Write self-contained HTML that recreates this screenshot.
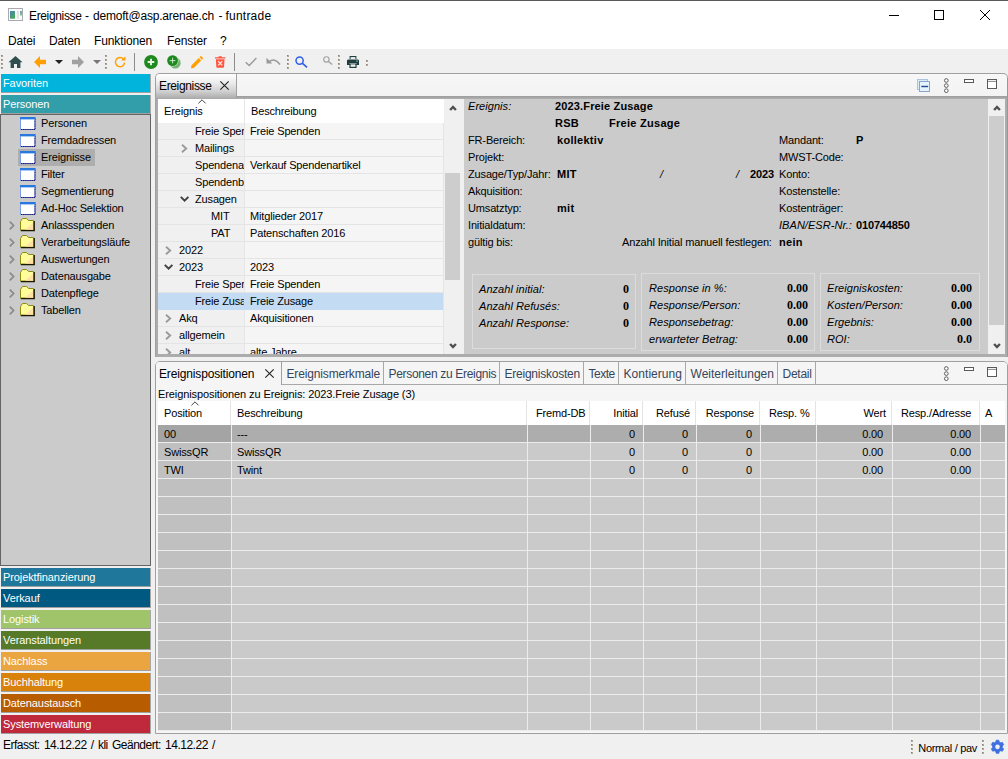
<!DOCTYPE html>
<html lang="de"><head><meta charset="utf-8"><title>Ereignisse - demoft@asp.arenae.ch - funtrade</title>
<style>
*{box-sizing:border-box;margin:0;padding:0}
html,body{width:1008px;height:759px;overflow:hidden;background:#f0f0f0}
body{font-family:"Liberation Sans",sans-serif;font-size:11px;color:#000;position:relative}
.abs{position:absolute}
.t{position:absolute;white-space:nowrap;line-height:14px;height:14px}
.ui{font-size:12px;letter-spacing:-0.12px}
.b{font-weight:bold}
.i{font-style:italic}
.r{text-align:right}
.sb{font-family:"Liberation Serif",serif;font-weight:bold;font-size:12px;letter-spacing:0}
#title{left:0;top:0;width:1008px;height:31px;background:#fff;border-top:1px solid #5a5a5a}
#menu{left:0;top:31px;width:1008px;height:18px;background:#fff}
#tool{left:0;top:49px;width:1008px;height:25px;background:#f0f0f0}
.bar{position:absolute;left:1px;width:150px;height:19px;border-right:1px solid #a8a8a8;border-bottom:1px solid #a0a0a0;color:#fff;font-size:11px;line-height:19px;padding-left:2px;white-space:nowrap;letter-spacing:-0.1px}
svg{position:absolute;overflow:visible}
</style></head><body>

<div id="title" class="abs"></div>
<svg style="left:8px;top:8px" width="15" height="13" viewBox="0 0 15 13">
<defs><linearGradient id="gi" x1="0" y1="0" x2="0.6" y2="1"><stop offset="0" stop-color="#4a80b8"/><stop offset="1" stop-color="#48a858"/></linearGradient><linearGradient id="gj" x1="0" y1="0" x2="0" y2="1"><stop offset="0" stop-color="#6a98c8"/><stop offset="1" stop-color="#90d080"/></linearGradient></defs>
<rect x="0.5" y="0.5" width="14" height="12" fill="#fafafa" stroke="#a8acb2"/>
<rect x="2" y="3" width="5" height="7.7" fill="url(#gi)"/>
<rect x="8.8" y="3" width="2.1" height="7.7" fill="#e2e2e2"/>
<rect x="12" y="3" width="2" height="4.6" fill="url(#gj)"/>
</svg>
<div class="t ui" style="left:29px;top:9px;letter-spacing:-0.35px">Ereignisse <span style="position:absolute;left:56px;top:0">- </span><span style="position:absolute;left:64px;top:0;letter-spacing:-0.2px">demoft@asp.arenae.ch </span><span style="position:absolute;left:189.5px;top:0">- </span><span style="position:absolute;left:196.5px;top:0;letter-spacing:0.22px">funtrade</span></div>
<div class="abs" style="left:889px;top:15px;width:10px;height:1px;background:#000"></div>
<div class="abs" style="left:934px;top:10px;width:10px;height:10px;border:1px solid #000"></div>
<svg style="left:980px;top:10px" width="10" height="10" viewBox="0 0 10 10"><path d="M0 0L10 10M10 0L0 10" stroke="#000" stroke-width="1" fill="none"/></svg>
<div id="menu" class="abs"></div>
<div class="t ui" style="left:8px;top:34px">Datei</div>
<div class="t ui" style="left:49px;top:34px">Daten</div>
<div class="t ui" style="left:94px;top:34px">Funktionen</div>
<div class="t ui" style="left:167px;top:34px">Fenster</div>
<div class="t ui" style="left:220px;top:34px">?</div>
<div id="tool" class="abs"></div>
<svg style="left:1px;top:55px" width="3" height="15" viewBox="0 0 3 15"><path d="M0 0h2v2h-2zM0 4h2v2h-2zM0 8h2v2h-2zM0 12h2v2h-2z" fill="#b0a694"/><path d="M0 0h1v1h-1zM0 4h1v1h-1zM0 8h1v1h-1zM0 12h1v1h-1z" fill="#8a7e6a"/></svg>
<svg style="left:105px;top:55px" width="3" height="15" viewBox="0 0 3 15"><path d="M0 0h2v2h-2zM0 4h2v2h-2zM0 8h2v2h-2zM0 12h2v2h-2z" fill="#b0a694"/><path d="M0 0h1v1h-1zM0 4h1v1h-1zM0 8h1v1h-1zM0 12h1v1h-1z" fill="#8a7e6a"/></svg>
<svg style="left:287px;top:55px" width="3" height="15" viewBox="0 0 3 15"><path d="M0 0h2v2h-2zM0 4h2v2h-2zM0 8h2v2h-2zM0 12h2v2h-2z" fill="#b0a694"/><path d="M0 0h1v1h-1zM0 4h1v1h-1zM0 8h1v1h-1zM0 12h1v1h-1z" fill="#8a7e6a"/></svg>
<svg style="left:338px;top:55px" width="3" height="15" viewBox="0 0 3 15"><path d="M0 0h2v2h-2zM0 4h2v2h-2zM0 8h2v2h-2zM0 12h2v2h-2z" fill="#b0a694"/><path d="M0 0h1v1h-1zM0 4h1v1h-1zM0 8h1v1h-1zM0 12h1v1h-1z" fill="#8a7e6a"/></svg>
<svg style="left:366px;top:60px" width="2" height="6" viewBox="0 0 2 6"><path d="M0 0h2v2h-2zM0 4h2v2h-2z" fill="#b0a694"/><path d="M0 0h1v1h-1zM0 4h1v1h-1z" fill="#8a7e6a"/></svg>
<svg style="left:8px;top:55px" width="15" height="14" viewBox="0 0 15 14"><path d="M7.5 1L0.5 7.2H2.6V13H6V9H9V13H12.4V7.2H14.5Z" fill="#2f4f4f"/></svg>
<svg style="left:34px;top:56px" width="12" height="12" viewBox="0 0 12 12"><path d="M0 6L6 0V3.7H12V8.3H6V12Z" fill="#ffa000"/></svg>
<svg style="left:55px;top:60px" width="8" height="4" viewBox="0 0 8 4"><path d="M0 0H8L4 4Z" fill="#222"/></svg>
<svg style="left:72px;top:56px" width="12" height="12" viewBox="0 0 12 12"><path d="M12 6L6 0V3.7H0V8.3H6V12Z" fill="#a0a0a0"/></svg>
<svg style="left:93px;top:60px" width="8" height="4" viewBox="0 0 8 4"><path d="M0 0H8L4 4Z" fill="#777"/></svg>
<svg style="left:114px;top:56px" width="12" height="12" viewBox="0 0 12 12"><path d="M9.6 3.2A4.6 4.6 0 1 0 10.6 6.6" stroke="#ffa000" stroke-width="1.5" fill="none"/><path d="M11.5 0.3V4.6H7.2Z" fill="#ffa000"/></svg>
<div class="abs" style="left:134px;top:53px;width:1px;height:18px;background:#8c8c8c"></div>
<svg style="left:144px;top:55px" width="14" height="14" viewBox="0 0 14 14"><circle cx="7" cy="7" r="6.9" fill="#1e8a1e"/><path d="M7 3.7V10.3M3.7 7H10.3" stroke="#e4f4e4" stroke-width="1.9"/></svg>
<svg style="left:167px;top:55px" width="14" height="14" viewBox="0 0 14 14"><circle cx="8.2" cy="8" r="5.5" fill="#74b474"/><circle cx="5.6" cy="5.6" r="5.9" fill="#e4f0e4"/><circle cx="5.6" cy="5.6" r="5.4" fill="#1e8a1e"/><path d="M5.6 2.8V8.4M2.8 5.6H8.4" stroke="#d8f0d8" stroke-width="0.9"/></svg>
<svg style="left:189.8px;top:55.6px" width="13.5" height="13" viewBox="0 0 14 14"><path d="M0.8 13.2L1.2 10.2L9.2 2.2L11.8 4.8L3.8 12.8Z M10 1.4L11 0.4Q11.5 0 12 0.4L13.6 2Q14 2.5 13.6 3L12.6 4Z" fill="#ffa000"/></svg>
<svg style="left:215px;top:56px" width="10.4" height="12" viewBox="0 0 11 12"><path d="M0 1H3.5L4 0H7L7.5 1H11V2.4H0Z M0.9 3.2H10.1L9.6 11Q9.5 12 8.6 12H2.4Q1.5 12 1.4 11Z" fill="#fc5640"/><path d="M3.4 5.2L7.6 9.6M7.6 5.2L3.4 9.6" stroke="#fde8e4" stroke-width="1.3"/></svg>
<div class="abs" style="left:234px;top:53px;width:1px;height:18px;background:#8c8c8c"></div>
<svg style="left:245px;top:57px" width="12" height="10" viewBox="0 0 12 10"><path d="M0.7 5.2L4.2 8.6L11.4 1" stroke="#9a9a9a" stroke-width="1.4" fill="none"/></svg>
<svg style="left:266px;top:57px" width="15" height="9" viewBox="0 0 15 9"><path d="M0.5 0.8V6.4H6.2Z" fill="#9a9a9a"/><path d="M3 4.8Q8.5 0.2 14 7.6" stroke="#9a9a9a" stroke-width="1.6" fill="none"/></svg>
<svg style="left:295px;top:56px" width="13" height="12" viewBox="0 0 13 12"><circle cx="4.6" cy="4.6" r="3.6" stroke="#2f5fe8" stroke-width="1.5" fill="none"/><path d="M7.2 7.2L12 11.4" stroke="#2f5fe8" stroke-width="1.7"/></svg>
<svg style="left:323px;top:56px" width="10" height="9" viewBox="0 0 10 9"><circle cx="3.4" cy="3.4" r="2.7" stroke="#a0a0a0" stroke-width="1.1" fill="none"/><path d="M5.4 5.4L9.2 8.6" stroke="#a0a0a0" stroke-width="1.3"/></svg>
<svg style="left:347px;top:56px" width="12" height="12" viewBox="0 0 12 12"><path d="M2.6 0H9.4V3H2.6Z M1.4 3.4H10.6Q12 3.4 12 4.8V9H9.6V7H2.4V9H0V4.8Q0 3.4 1.4 3.4Z M2.4 7.4H9.6V12H2.4Z" fill="#1f3f3f"/><rect x="3.6" y="1.1" width="4.8" height="1.9" fill="#f0f0f0"/><rect x="3.6" y="8.4" width="4.8" height="2.4" fill="#f0f0f0"/><rect x="9.3" y="4.6" width="1.4" height="1" fill="#c8d8d8"/></svg>
<div class="bar" style="top:74px;background:#00b4dc">Favoriten</div>
<div class="bar" style="top:95px;background:#329eaa">Personen</div>
<div class="bar" style="top:568px;background:#1f789c">Projektfinanzierung</div>
<div class="bar" style="top:589px;background:#005980">Verkauf</div>
<div class="bar" style="top:610px;background:#a0c46a">Logistik</div>
<div class="bar" style="top:631px;background:#567a28">Veranstaltungen</div>
<div class="bar" style="top:652px;background:#eba540">Nachlass</div>
<div class="bar" style="top:673px;background:#d8820c">Buchhaltung</div>
<div class="bar" style="top:694px;background:#b85c00">Datenaustausch</div>
<div class="bar" style="top:715px;background:#c0283c">Systemverwaltung</div>
<div class="abs" style="left:0;top:114px;width:151px;height:452px;background:#cbcbcb;border:1px solid #646464"></div>
<div class="abs" style="left:18px;top:149px;width:77px;height:17px;background:#aeaeae"></div>
<svg style="left:20px;top:117px" width="16" height="13" viewBox="0 0 16 13"><rect x="0.5" y="0.5" width="14.5" height="12" fill="#fff" stroke="#7c9ce8" stroke-width="1"/><path d="M15 2V12.5H1" fill="none" stroke="#181878" stroke-width="1.1" stroke-dasharray="1.5 0.6"/><rect x="0" y="0" width="15.5" height="2" fill="#2878e0"/><rect x="1" y="2" width="13.5" height="1" fill="#a8ccf8"/></svg>
<div class="t" style="left:41px;top:116px;letter-spacing:-0.15px">Personen</div>
<svg style="left:20px;top:134px" width="16" height="13" viewBox="0 0 16 13"><rect x="0.5" y="0.5" width="14.5" height="12" fill="#fff" stroke="#7c9ce8" stroke-width="1"/><path d="M15 2V12.5H1" fill="none" stroke="#181878" stroke-width="1.1" stroke-dasharray="1.5 0.6"/><rect x="0" y="0" width="15.5" height="2" fill="#2878e0"/><rect x="1" y="2" width="13.5" height="1" fill="#a8ccf8"/></svg>
<div class="t" style="left:41px;top:133px;letter-spacing:-0.15px">Fremdadressen</div>
<svg style="left:20px;top:151px" width="16" height="13" viewBox="0 0 16 13"><rect x="0.5" y="0.5" width="14.5" height="12" fill="#fff" stroke="#7c9ce8" stroke-width="1"/><path d="M15 2V12.5H1" fill="none" stroke="#181878" stroke-width="1.1" stroke-dasharray="1.5 0.6"/><rect x="0" y="0" width="15.5" height="2" fill="#2878e0"/><rect x="1" y="2" width="13.5" height="1" fill="#a8ccf8"/></svg>
<div class="t" style="left:41px;top:150px;letter-spacing:-0.15px">Ereignisse</div>
<svg style="left:20px;top:168px" width="16" height="13" viewBox="0 0 16 13"><rect x="0.5" y="0.5" width="14.5" height="12" fill="#fff" stroke="#7c9ce8" stroke-width="1"/><path d="M15 2V12.5H1" fill="none" stroke="#181878" stroke-width="1.1" stroke-dasharray="1.5 0.6"/><rect x="0" y="0" width="15.5" height="2" fill="#2878e0"/><rect x="1" y="2" width="13.5" height="1" fill="#a8ccf8"/></svg>
<div class="t" style="left:41px;top:167px;letter-spacing:-0.15px">Filter</div>
<svg style="left:20px;top:185px" width="16" height="13" viewBox="0 0 16 13"><rect x="0.5" y="0.5" width="14.5" height="12" fill="#fff" stroke="#7c9ce8" stroke-width="1"/><path d="M15 2V12.5H1" fill="none" stroke="#181878" stroke-width="1.1" stroke-dasharray="1.5 0.6"/><rect x="0" y="0" width="15.5" height="2" fill="#2878e0"/><rect x="1" y="2" width="13.5" height="1" fill="#a8ccf8"/></svg>
<div class="t" style="left:41px;top:184px;letter-spacing:-0.15px">Segmentierung</div>
<svg style="left:20px;top:202px" width="16" height="13" viewBox="0 0 16 13"><rect x="0.5" y="0.5" width="14.5" height="12" fill="#fff" stroke="#7c9ce8" stroke-width="1"/><path d="M15 2V12.5H1" fill="none" stroke="#181878" stroke-width="1.1" stroke-dasharray="1.5 0.6"/><rect x="0" y="0" width="15.5" height="2" fill="#2878e0"/><rect x="1" y="2" width="13.5" height="1" fill="#a8ccf8"/></svg>
<div class="t" style="left:41px;top:201px;letter-spacing:-0.15px">Ad-Hoc Selektion</div>
<svg style="left:9px;top:221px" width="6" height="9" viewBox="0 0 6 9"><path d="M0.8 0.7L4.6 4.5L0.8 8.3" stroke="#8a8a8a" stroke-width="1.7" fill="none"/></svg>
<svg style="left:20px;top:218px" width="15" height="13" viewBox="0 0 15 13"><path d="M0.5 12V3.5L2 1Q2.3 0.5 3 0.5H6.2Q6.8 0.5 7.2 1L8.5 2.5H13.5V12Z" fill="#fffc9c" stroke="#8c8c10" stroke-width="1"/><path d="M5 12L13 4.5V12Z" fill="#ffd8a8" opacity="0.75"/><path d="M14.3 3V12.6H0.8" stroke="#1a1a00" stroke-width="1.2" fill="none"/></svg>
<div class="t" style="left:41px;top:218px;letter-spacing:-0.15px">Anlassspenden</div>
<svg style="left:9px;top:238px" width="6" height="9" viewBox="0 0 6 9"><path d="M0.8 0.7L4.6 4.5L0.8 8.3" stroke="#8a8a8a" stroke-width="1.7" fill="none"/></svg>
<svg style="left:20px;top:235px" width="15" height="13" viewBox="0 0 15 13"><path d="M0.5 12V3.5L2 1Q2.3 0.5 3 0.5H6.2Q6.8 0.5 7.2 1L8.5 2.5H13.5V12Z" fill="#fffc9c" stroke="#8c8c10" stroke-width="1"/><path d="M5 12L13 4.5V12Z" fill="#ffd8a8" opacity="0.75"/><path d="M14.3 3V12.6H0.8" stroke="#1a1a00" stroke-width="1.2" fill="none"/></svg>
<div class="t" style="left:41px;top:235px;letter-spacing:-0.15px">Verarbeitungsläufe</div>
<svg style="left:9px;top:255px" width="6" height="9" viewBox="0 0 6 9"><path d="M0.8 0.7L4.6 4.5L0.8 8.3" stroke="#8a8a8a" stroke-width="1.7" fill="none"/></svg>
<svg style="left:20px;top:252px" width="15" height="13" viewBox="0 0 15 13"><path d="M0.5 12V3.5L2 1Q2.3 0.5 3 0.5H6.2Q6.8 0.5 7.2 1L8.5 2.5H13.5V12Z" fill="#fffc9c" stroke="#8c8c10" stroke-width="1"/><path d="M5 12L13 4.5V12Z" fill="#ffd8a8" opacity="0.75"/><path d="M14.3 3V12.6H0.8" stroke="#1a1a00" stroke-width="1.2" fill="none"/></svg>
<div class="t" style="left:41px;top:252px;letter-spacing:-0.15px">Auswertungen</div>
<svg style="left:9px;top:272px" width="6" height="9" viewBox="0 0 6 9"><path d="M0.8 0.7L4.6 4.5L0.8 8.3" stroke="#8a8a8a" stroke-width="1.7" fill="none"/></svg>
<svg style="left:20px;top:269px" width="15" height="13" viewBox="0 0 15 13"><path d="M0.5 12V3.5L2 1Q2.3 0.5 3 0.5H6.2Q6.8 0.5 7.2 1L8.5 2.5H13.5V12Z" fill="#fffc9c" stroke="#8c8c10" stroke-width="1"/><path d="M5 12L13 4.5V12Z" fill="#ffd8a8" opacity="0.75"/><path d="M14.3 3V12.6H0.8" stroke="#1a1a00" stroke-width="1.2" fill="none"/></svg>
<div class="t" style="left:41px;top:269px;letter-spacing:-0.15px">Datenausgabe</div>
<svg style="left:9px;top:289px" width="6" height="9" viewBox="0 0 6 9"><path d="M0.8 0.7L4.6 4.5L0.8 8.3" stroke="#8a8a8a" stroke-width="1.7" fill="none"/></svg>
<svg style="left:20px;top:286px" width="15" height="13" viewBox="0 0 15 13"><path d="M0.5 12V3.5L2 1Q2.3 0.5 3 0.5H6.2Q6.8 0.5 7.2 1L8.5 2.5H13.5V12Z" fill="#fffc9c" stroke="#8c8c10" stroke-width="1"/><path d="M5 12L13 4.5V12Z" fill="#ffd8a8" opacity="0.75"/><path d="M14.3 3V12.6H0.8" stroke="#1a1a00" stroke-width="1.2" fill="none"/></svg>
<div class="t" style="left:41px;top:286px;letter-spacing:-0.15px">Datenpflege</div>
<svg style="left:9px;top:306px" width="6" height="9" viewBox="0 0 6 9"><path d="M0.8 0.7L4.6 4.5L0.8 8.3" stroke="#8a8a8a" stroke-width="1.7" fill="none"/></svg>
<svg style="left:20px;top:303px" width="15" height="13" viewBox="0 0 15 13"><path d="M0.5 12V3.5L2 1Q2.3 0.5 3 0.5H6.2Q6.8 0.5 7.2 1L8.5 2.5H13.5V12Z" fill="#fffc9c" stroke="#8c8c10" stroke-width="1"/><path d="M5 12L13 4.5V12Z" fill="#ffd8a8" opacity="0.75"/><path d="M14.3 3V12.6H0.8" stroke="#1a1a00" stroke-width="1.2" fill="none"/></svg>
<div class="t" style="left:41px;top:303px;letter-spacing:-0.15px">Tabellen</div><div class="abs" style="left:155px;top:73px;width:853px;height:284px;background:#acacac;border:1px solid #a0a0a0;border-bottom:none;border-right:none;border-radius:5px 5px 0 0"></div>
<div class="abs" style="left:156px;top:74px;width:851px;height:22px;background:linear-gradient(#f7f7f7,#f3f3f3);border-radius:4px 4px 0 0"></div>
<div class="abs" style="left:156px;top:96px;width:852px;height:3px;background:linear-gradient(#9c9c9c,#b0b0b0)"></div>
<div class="abs" style="left:156px;top:74px;width:81px;height:25px;background:linear-gradient(#ffffff 0,#ececec 35%,#cfcfcf 70%,#a8a8a8 100%);border-right:1px solid #a0a0a0;border-radius:4px 0 0 0"></div>
<div class="t ui" style="left:159px;top:79px;letter-spacing:-0.35px">Ereignisse</div>
<svg style="left:220px;top:81px" width="9" height="9" viewBox="0 0 9 9"><path d="M0.3 0.3L8.7 8.7M8.7 0.3L0.3 8.7" stroke="#222" stroke-width="1.1" fill="none"/></svg>
<svg style="left:917px;top:79px" width="14" height="14" viewBox="0 0 14 14"><rect x="0.5" y="0.5" width="10" height="10" fill="#dcebf8" stroke="#a8c4e4"/><rect x="2.5" y="2.5" width="10" height="10" fill="#e6f2fc" stroke="#8ca4cc"/><rect x="4.3" y="6.8" width="6.8" height="1.4" fill="#1a4e90"/></svg>
<svg style="left:943px;top:77.5px" width="6" height="15" viewBox="0 0 6 15"><circle cx="3.3" cy="2.5" r="1.85" fill="#fafafa" stroke="#505050" stroke-width="0.9"/><circle cx="3.3" cy="7.6" r="1.85" fill="#fafafa" stroke="#505050" stroke-width="0.9"/><circle cx="3.3" cy="12.7" r="1.85" fill="#fafafa" stroke="#505050" stroke-width="0.9"/></svg>
<div class="abs" style="left:964px;top:79px;width:10px;height:4px;border:1px solid #5a5a5a;background:#fff"></div>
<svg style="left:987px;top:79px" width="10" height="10" viewBox="0 0 10 10"><rect x="0.5" y="0.5" width="9" height="9" fill="#fff" stroke="#5a5a5a"/><path d="M1 2.4H9" stroke="#6a6a6a" stroke-width="0.8"/></svg>
<div class="abs" style="left:1007px;top:78px;width:1px;height:279px;background:#989898"></div>
<div class="abs" style="left:158px;top:99px;width:286px;height:255px;background:#f5f5f5;overflow:hidden">
<div class="abs" style="left:0;top:0;width:286px;height:24px;background:#fff"></div>
<div class="abs" style="left:0;top:24px;width:86px;height:231px;background:#f0f0f0"></div>
<div class="abs" style="left:86px;top:0;width:1px;height:255px;background:#e6e6e6"></div>
<div class="abs" style="left:0;top:40px;width:286px;height:1px;background:#e4e4e4"></div>
<div class="abs" style="left:0;top:57px;width:286px;height:1px;background:#e4e4e4"></div>
<div class="abs" style="left:0;top:74px;width:286px;height:1px;background:#e4e4e4"></div>
<div class="abs" style="left:0;top:91px;width:286px;height:1px;background:#e4e4e4"></div>
<div class="abs" style="left:0;top:108px;width:286px;height:1px;background:#e4e4e4"></div>
<div class="abs" style="left:0;top:125px;width:286px;height:1px;background:#e4e4e4"></div>
<div class="abs" style="left:0;top:142px;width:286px;height:1px;background:#e4e4e4"></div>
<div class="abs" style="left:0;top:159px;width:286px;height:1px;background:#e4e4e4"></div>
<div class="abs" style="left:0;top:176px;width:286px;height:1px;background:#e4e4e4"></div>
<div class="abs" style="left:0;top:193px;width:286px;height:1px;background:#e4e4e4"></div>
<div class="abs" style="left:0;top:210px;width:286px;height:1px;background:#e4e4e4"></div>
<div class="abs" style="left:0;top:227px;width:286px;height:1px;background:#e4e4e4"></div>
<div class="abs" style="left:0;top:244px;width:286px;height:1px;background:#e4e4e4"></div>
<div class="abs" style="left:0;top:261px;width:286px;height:1px;background:#e4e4e4"></div>
<div class="abs" style="left:0;top:194px;width:285px;height:17px;background:#c3dcf4"></div>
<div class="abs" style="left:285px;top:24px;width:1px;height:231px;background:#e4e4e4"></div>
<svg style="left:40px;top:0" width="8" height="5" viewBox="0 0 8 5"><path d="M0.4 4.4L4 0.8L7.6 4.4" stroke="#444" stroke-width="1" fill="none"/></svg>
<div class="t" style="left:6px;top:5px;letter-spacing:-0.15px">Ereignis</div>
<div class="t" style="left:93px;top:5px;letter-spacing:-0.15px">Beschreibung</div>
<div class="t" style="left:37px;top:25px;width:49px;overflow:hidden;letter-spacing:-0.15px">Freie Spen</div>
<div class="t" style="left:92px;top:25px;letter-spacing:-0.15px">Freie Spenden</div>
<svg style="left:22.9px;top:45px" width="7" height="9" viewBox="0 0 7 9"><path d="M1 0.7L5.2 4.5L1 8.3" stroke="#9a9a9a" stroke-width="1.9" fill="none"/></svg>
<div class="t" style="left:37px;top:42px;width:49px;overflow:hidden;letter-spacing:-0.15px">Mailings</div>
<div class="t" style="left:37px;top:59px;width:49px;overflow:hidden;letter-spacing:-0.15px">Spendena</div>
<div class="t" style="left:92px;top:59px;letter-spacing:-0.15px">Verkauf Spendenartikel</div>
<div class="t" style="left:37px;top:76px;width:49px;overflow:hidden;letter-spacing:-0.15px">Spendenb</div>
<svg style="left:22.0px;top:96.8px" width="9.2" height="6" viewBox="0 0 9.2 6"><path d="M0.8 0.9L4.6 4.7L8.4 0.9" stroke="#404040" stroke-width="2" fill="none"/></svg>
<div class="t" style="left:37px;top:93px;width:49px;overflow:hidden;letter-spacing:-0.15px">Zusagen</div>
<div class="t" style="left:53px;top:110px;width:33px;overflow:hidden;letter-spacing:-0.15px">MIT</div>
<div class="t" style="left:92px;top:110px;letter-spacing:-0.15px">Mitglieder 2017</div>
<div class="t" style="left:53px;top:127px;width:33px;overflow:hidden;letter-spacing:-0.15px">PAT</div>
<div class="t" style="left:92px;top:127px;letter-spacing:-0.15px">Patenschaften 2016</div>
<svg style="left:6.7px;top:147px" width="7" height="9" viewBox="0 0 7 9"><path d="M1 0.7L5.2 4.5L1 8.3" stroke="#9a9a9a" stroke-width="1.9" fill="none"/></svg>
<div class="t" style="left:21px;top:144px;width:65px;overflow:hidden;letter-spacing:-0.15px">2022</div>
<svg style="left:5.8px;top:164.8px" width="9.2" height="6" viewBox="0 0 9.2 6"><path d="M0.8 0.9L4.6 4.7L8.4 0.9" stroke="#404040" stroke-width="2" fill="none"/></svg>
<div class="t" style="left:21px;top:161px;width:65px;overflow:hidden;letter-spacing:-0.15px">2023</div>
<div class="t" style="left:92px;top:161px;letter-spacing:-0.15px">2023</div>
<div class="t" style="left:37px;top:178px;width:49px;overflow:hidden;letter-spacing:-0.15px">Freie Spen</div>
<div class="t" style="left:92px;top:178px;letter-spacing:-0.15px">Freie Spenden</div>
<div class="t" style="left:37px;top:195px;width:49px;overflow:hidden;letter-spacing:-0.15px">Freie Zusa</div>
<div class="t" style="left:92px;top:195px;letter-spacing:-0.15px">Freie Zusage</div>
<svg style="left:6.7px;top:215px" width="7" height="9" viewBox="0 0 7 9"><path d="M1 0.7L5.2 4.5L1 8.3" stroke="#9a9a9a" stroke-width="1.9" fill="none"/></svg>
<div class="t" style="left:21px;top:212px;width:65px;overflow:hidden;letter-spacing:-0.15px">Akq</div>
<div class="t" style="left:92px;top:212px;letter-spacing:-0.15px">Akquisitionen</div>
<svg style="left:6.7px;top:232px" width="7" height="9" viewBox="0 0 7 9"><path d="M1 0.7L5.2 4.5L1 8.3" stroke="#9a9a9a" stroke-width="1.9" fill="none"/></svg>
<div class="t" style="left:21px;top:229px;width:65px;overflow:hidden;letter-spacing:-0.15px">allgemein</div>
<svg style="left:6.7px;top:249px" width="7" height="9" viewBox="0 0 7 9"><path d="M1 0.7L5.2 4.5L1 8.3" stroke="#9a9a9a" stroke-width="1.9" fill="none"/></svg>
<div class="t" style="left:21px;top:246px;width:65px;overflow:hidden;letter-spacing:-0.15px">alt</div>
<div class="t" style="left:92px;top:246px;letter-spacing:-0.15px">alte Jahre</div>
</div>
<div class="abs" style="left:444px;top:99px;width:17px;height:255px;background:#f0f0f0"></div>
<div class="abs" style="left:445px;top:173px;width:15px;height:107px;background:#cdcdcd"></div>
<svg style="left:448.6px;top:104px" width="8" height="7" viewBox="0 0 8 7"><path d="M1.1 6L4 2.9L6.9 6" stroke="#505050" stroke-width="2.4" fill="none"/></svg>
<svg style="left:448.6px;top:343px" width="8" height="7" viewBox="0 0 8 7"><path d="M1.1 1L4 4.1L6.9 1" stroke="#505050" stroke-width="2.4" fill="none"/></svg>
<div class="abs" style="left:461px;top:99px;width:3px;height:255px;background:#f0f0f0"></div>
<div class="abs" style="left:464px;top:99px;width:524px;height:255px;background:#cbcbcb"></div>
<div class="abs" style="left:988px;top:99px;width:17px;height:255px;background:#f0f0f0"></div>
<div class="abs" style="left:989px;top:116px;width:15px;height:209px;background:#cdcdcd"></div>
<svg style="left:992.6px;top:104px" width="8" height="7" viewBox="0 0 8 7"><path d="M1.1 6L4 2.9L6.9 6" stroke="#505050" stroke-width="2.4" fill="none"/></svg>
<svg style="left:992.6px;top:343px" width="8" height="7" viewBox="0 0 8 7"><path d="M1.1 1L4 4.1L6.9 1" stroke="#505050" stroke-width="2.4" fill="none"/></svg>
<div class="t i" style="left:468px;top:99px;letter-spacing:0.05px;">Ereignis:</div>
<div class="t b" style="left:555px;top:99px;letter-spacing:0.15px;">2023.Freie Zusage</div>
<div class="t b" style="left:555px;top:116px;letter-spacing:0.28px;">RSB</div>
<div class="t b" style="left:609px;top:116px;letter-spacing:0.28px;">Freie Zusage</div>
<div class="t " style="left:468px;top:133px;letter-spacing:-0.15px;">FR-Bereich:</div>
<div class="t b" style="left:557px;top:133px;letter-spacing:0.28px;">kollektiv</div>
<div class="t " style="left:779px;top:133px;letter-spacing:-0.15px;">Mandant:</div>
<div class="t b" style="left:856px;top:133px;letter-spacing:0.28px;">P</div>
<div class="t " style="left:468px;top:150px;letter-spacing:-0.15px;">Projekt:</div>
<div class="t " style="left:779px;top:150px;letter-spacing:-0.15px;">MWST-Code:</div>
<div class="t " style="left:468px;top:167px;letter-spacing:-0.15px;">Zusage/Typ/Jahr:</div>
<div class="t b" style="left:557px;top:167px;letter-spacing:0.28px;">MIT</div>
<div class="t i" style="left:660px;top:167px;letter-spacing:0.05px;">/</div>
<div class="t i" style="left:736px;top:167px;letter-spacing:0.05px;">/</div>
<div class="t b" style="left:750px;top:167px;letter-spacing:-0.15px;">2023</div>
<div class="t " style="left:779px;top:167px;letter-spacing:-0.15px;">Konto:</div>
<div class="t " style="left:468px;top:184px;letter-spacing:-0.15px;">Akquisition:</div>
<div class="t " style="left:779px;top:184px;letter-spacing:-0.15px;">Kostenstelle:</div>
<div class="t " style="left:468px;top:201px;letter-spacing:-0.15px;">Umsatztyp:</div>
<div class="t b" style="left:557px;top:201px;letter-spacing:0.28px;">mit</div>
<div class="t " style="left:779px;top:201px;letter-spacing:-0.15px;">Kostenträger:</div>
<div class="t " style="left:468px;top:218px;letter-spacing:-0.15px;">Initialdatum:</div>
<div class="t i" style="left:779px;top:218px;letter-spacing:0.05px;">IBAN/ESR-Nr.:</div>
<div class="t b" style="left:856px;top:218px;letter-spacing:-0.15px;">010744850</div>
<div class="t " style="left:468px;top:235px;letter-spacing:-0.15px;">gültig bis:</div>
<div class="t " style="left:622px;top:235px;letter-spacing:-0.15px;">Anzahl Initial manuell festlegen:</div>
<div class="t b" style="left:779px;top:235px;letter-spacing:0.28px;">nein</div>
<div class="abs" style="left:472px;top:274px;width:164px;height:75px;border:1px solid #dcdcdc"></div>
<div class="abs" style="left:641px;top:273px;width:174px;height:78px;border:1px solid #dcdcdc"></div>
<div class="abs" style="left:820px;top:273px;width:160px;height:78px;border:1px solid #dcdcdc"></div>
<div class="t i" style="left:479px;top:282px;letter-spacing:0.05px;">Anzahl initial:</div>
<div class="t r sb" style="left:509px;width:120px;top:282px;">0</div>
<div class="t i" style="left:479px;top:299px;letter-spacing:0.05px;">Anzahl Refusés:</div>
<div class="t r sb" style="left:509px;width:120px;top:299px;">0</div>
<div class="t i" style="left:479px;top:316px;letter-spacing:0.05px;">Anzahl Response:</div>
<div class="t r sb" style="left:509px;width:120px;top:316px;">0</div>
<div class="t i" style="left:649px;top:281px;letter-spacing:0.05px;">Response in %:</div>
<div class="t r sb" style="left:688px;width:120px;top:281px;">0.00</div>
<div class="t i" style="left:649px;top:298px;letter-spacing:0.05px;">Response/Person:</div>
<div class="t r sb" style="left:688px;width:120px;top:298px;">0.00</div>
<div class="t i" style="left:649px;top:315px;letter-spacing:0.05px;">Responsebetrag:</div>
<div class="t r sb" style="left:688px;width:120px;top:315px;">0.00</div>
<div class="t i" style="left:649px;top:332px;letter-spacing:0.05px;">erwarteter Betrag:</div>
<div class="t r sb" style="left:688px;width:120px;top:332px;">0.00</div>
<div class="t i" style="left:827px;top:281px;letter-spacing:0.05px;">Ereigniskosten:</div>
<div class="t r sb" style="left:852px;width:120px;top:281px;">0.00</div>
<div class="t i" style="left:827px;top:298px;letter-spacing:0.05px;">Kosten/Person:</div>
<div class="t r sb" style="left:852px;width:120px;top:298px;">0.00</div>
<div class="t i" style="left:827px;top:315px;letter-spacing:0.05px;">Ergebnis:</div>
<div class="t r sb" style="left:852px;width:120px;top:315px;">0.00</div>
<div class="t i" style="left:827px;top:332px;letter-spacing:0.05px;">ROI:</div>
<div class="t r sb" style="left:852px;width:120px;top:332px;">0.0</div><div class="abs" style="left:155px;top:361px;width:853px;height:373px;background:#f5f5f5;border:1px solid #a0a0a0;border-radius:5px 5px 0 0"></div>
<div class="abs" style="left:156px;top:362px;width:851px;height:23px;background:#f5f5f5;border-bottom:1px solid #a8a8a8;border-radius:4px 4px 0 0"></div>
<div class="abs" style="left:156px;top:362px;width:126px;height:23px;background:#f5f5f5;border-right:1px solid #a0a0a0;border-radius:4px 0 0 0"></div>
<div class="t ui" style="left:159px;top:367px;letter-spacing:-0.15px">Ereignispositionen</div>
<svg style="left:265px;top:369px" width="9" height="9" viewBox="0 0 9 9"><path d="M0.3 0.3L8.7 8.7M8.7 0.3L0.3 8.7" stroke="#222" stroke-width="1.1" fill="none"/></svg>
<div class="abs ui" style="left:282px;top:362px;width:102px;height:23px;border:1px solid #a8a8a8;border-left:none;border-top:none;color:#36465a;font-size:12px;line-height:14px;padding:5px 0 0 4.5px;white-space:nowrap;letter-spacing:-0.15px">Ereignismerkmale</div>
<div class="abs ui" style="left:384px;top:362px;width:116px;height:23px;border:1px solid #a8a8a8;border-left:none;border-top:none;color:#36465a;font-size:12px;line-height:14px;padding:5px 0 0 4.5px;white-space:nowrap;letter-spacing:-0.32px">Personen zu Ereignis</div>
<div class="abs ui" style="left:500px;top:362px;width:84px;height:23px;border:1px solid #a8a8a8;border-left:none;border-top:none;color:#36465a;font-size:12px;line-height:14px;padding:5px 0 0 4.5px;white-space:nowrap;letter-spacing:-0.23px">Ereigniskosten</div>
<div class="abs ui" style="left:584px;top:362px;width:35px;height:23px;border:1px solid #a8a8a8;border-left:none;border-top:none;color:#36465a;font-size:12px;line-height:14px;padding:5px 0 0 4.5px;white-space:nowrap;letter-spacing:-0.5px">Texte</div>
<div class="abs ui" style="left:619px;top:362px;width:67px;height:23px;border:1px solid #a8a8a8;border-left:none;border-top:none;color:#36465a;font-size:12px;line-height:14px;padding:5px 0 0 4.5px;white-space:nowrap;letter-spacing:0.05px">Kontierung</div>
<div class="abs ui" style="left:686px;top:362px;width:92px;height:23px;border:1px solid #a8a8a8;border-left:none;border-top:none;color:#36465a;font-size:12px;line-height:14px;padding:5px 0 0 4.5px;white-space:nowrap;letter-spacing:0.02px">Weiterleitungen</div>
<div class="abs ui" style="left:778px;top:362px;width:38px;height:23px;border:1px solid #a8a8a8;border-left:none;border-top:none;color:#36465a;font-size:12px;line-height:14px;padding:5px 0 0 4.5px;white-space:nowrap;letter-spacing:-0.25px">Detail</div>
<svg style="left:943px;top:365.5px" width="6" height="15" viewBox="0 0 6 15"><circle cx="3.3" cy="2.5" r="1.85" fill="#fafafa" stroke="#505050" stroke-width="0.9"/><circle cx="3.3" cy="7.6" r="1.85" fill="#fafafa" stroke="#505050" stroke-width="0.9"/><circle cx="3.3" cy="12.7" r="1.85" fill="#fafafa" stroke="#505050" stroke-width="0.9"/></svg>
<div class="abs" style="left:964px;top:367px;width:10px;height:4px;border:1px solid #5a5a5a;background:#fff"></div>
<svg style="left:987px;top:367px" width="10" height="10" viewBox="0 0 10 10"><rect x="0.5" y="0.5" width="9" height="9" fill="#fff" stroke="#5a5a5a"/><path d="M1 2.4H9" stroke="#6a6a6a" stroke-width="0.8"/></svg>
<div class="t" style="left:158px;top:387px;letter-spacing:-0.1px">Ereignispositionen zu Ereignis: 2023.Freie Zusage (3)</div>
<div class="abs" style="left:158px;top:401px;width:847px;height:330px;background:#cacaca;overflow:hidden">
<div class="abs" style="left:0;top:0;width:847px;height:24px;background:#fff"></div>
<div class="abs" style="left:0;top:24px;width:73px;height:306px;background:#c0c0c0"></div>
<div class="abs" style="left:0;top:24px;width:847px;height:17px;background:#adadad"></div>
<div class="abs" style="left:0;top:24px;width:73px;height:17px;background:#a4a4a4"></div>
<div class="abs" style="left:0;top:41px;width:847px;height:1px;background:#ececec"></div>
<div class="abs" style="left:0;top:59px;width:847px;height:1px;background:#ececec"></div>
<div class="abs" style="left:0;top:77px;width:847px;height:1px;background:#ececec"></div>
<div class="abs" style="left:0;top:95px;width:847px;height:1px;background:#ececec"></div>
<div class="abs" style="left:0;top:113px;width:847px;height:1px;background:#ececec"></div>
<div class="abs" style="left:0;top:131px;width:847px;height:1px;background:#ececec"></div>
<div class="abs" style="left:0;top:149px;width:847px;height:1px;background:#ececec"></div>
<div class="abs" style="left:0;top:167px;width:847px;height:1px;background:#ececec"></div>
<div class="abs" style="left:0;top:185px;width:847px;height:1px;background:#ececec"></div>
<div class="abs" style="left:0;top:203px;width:847px;height:1px;background:#ececec"></div>
<div class="abs" style="left:0;top:221px;width:847px;height:1px;background:#ececec"></div>
<div class="abs" style="left:0;top:239px;width:847px;height:1px;background:#ececec"></div>
<div class="abs" style="left:0;top:257px;width:847px;height:1px;background:#ececec"></div>
<div class="abs" style="left:0;top:275px;width:847px;height:1px;background:#ececec"></div>
<div class="abs" style="left:0;top:293px;width:847px;height:1px;background:#ececec"></div>
<div class="abs" style="left:0;top:311px;width:847px;height:1px;background:#ececec"></div>
<div class="abs" style="left:0;top:329px;width:847px;height:1px;background:#ececec"></div>
<div class="abs" style="left:73px;top:24px;width:1px;height:306px;background:#ececec"></div>
<div class="abs" style="left:72px;top:0;width:1px;height:24px;background:#e4e4e4"></div>
<div class="abs" style="left:369px;top:24px;width:1px;height:306px;background:#ececec"></div>
<div class="abs" style="left:368px;top:0;width:1px;height:24px;background:#e4e4e4"></div>
<div class="abs" style="left:432px;top:24px;width:1px;height:306px;background:#ececec"></div>
<div class="abs" style="left:431px;top:0;width:1px;height:24px;background:#e4e4e4"></div>
<div class="abs" style="left:485px;top:24px;width:1px;height:306px;background:#ececec"></div>
<div class="abs" style="left:484px;top:0;width:1px;height:24px;background:#e4e4e4"></div>
<div class="abs" style="left:538px;top:24px;width:1px;height:306px;background:#ececec"></div>
<div class="abs" style="left:537px;top:0;width:1px;height:24px;background:#e4e4e4"></div>
<div class="abs" style="left:602px;top:24px;width:1px;height:306px;background:#ececec"></div>
<div class="abs" style="left:601px;top:0;width:1px;height:24px;background:#e4e4e4"></div>
<div class="abs" style="left:658px;top:24px;width:1px;height:306px;background:#ececec"></div>
<div class="abs" style="left:657px;top:0;width:1px;height:24px;background:#e4e4e4"></div>
<div class="abs" style="left:734px;top:24px;width:1px;height:306px;background:#ececec"></div>
<div class="abs" style="left:733px;top:0;width:1px;height:24px;background:#e4e4e4"></div>
<div class="abs" style="left:822px;top:24px;width:1px;height:306px;background:#ececec"></div>
<div class="abs" style="left:821px;top:0;width:1px;height:24px;background:#e4e4e4"></div>
<svg style="left:33px;top:0px" width="8" height="5" viewBox="0 0 8 5"><path d="M0.4 4.4L4 0.8L7.6 4.4" stroke="#444" stroke-width="1" fill="none"/></svg>
<div class="t" style="left:6px;top:5px;letter-spacing:-0.15px;">Position</div>
<div class="t" style="left:79px;top:5px;letter-spacing:-0.15px;">Beschreibung</div>
<div class="t" style="left:378px;top:5px;letter-spacing:-0.15px;">Fremd-DB</div>
<div class="t r" style="left:360px;width:120px;top:5px;letter-spacing:-0.15px">Initial</div>
<div class="t r" style="left:412px;width:120px;top:5px;letter-spacing:-0.15px">Refusé</div>
<div class="t r" style="left:476px;width:120px;top:5px;letter-spacing:-0.15px">Response</div>
<div class="t" style="left:611px;top:5px;letter-spacing:-0.15px;">Resp. %</div>
<div class="t r" style="left:608px;width:120px;top:5px;letter-spacing:-0.15px">Wert</div>
<div class="t" style="left:743px;top:5px;letter-spacing:-0.15px;">Resp./Adresse</div>
<div class="t" style="left:827px;top:5px;letter-spacing:-0.15px;">A</div>
<div class="t" style="left:6px;top:26px;letter-spacing:-0.15px;">00</div>
<div class="t" style="left:79px;top:26px;letter-spacing:-0.15px;">---</div>
<div class="t r" style="left:357px;width:120px;top:26px;letter-spacing:-0.15px">0</div>
<div class="t r" style="left:410px;width:120px;top:26px;letter-spacing:-0.15px">0</div>
<div class="t r" style="left:474px;width:120px;top:26px;letter-spacing:-0.15px">0</div>
<div class="t r" style="left:605px;width:120px;top:26px;letter-spacing:-0.15px">0.00</div>
<div class="t r" style="left:693px;width:120px;top:26px;letter-spacing:-0.15px">0.00</div>
<div class="t" style="left:6px;top:44px;letter-spacing:-0.15px;">SwissQR</div>
<div class="t" style="left:79px;top:44px;letter-spacing:-0.15px;">SwissQR</div>
<div class="t r" style="left:357px;width:120px;top:44px;letter-spacing:-0.15px">0</div>
<div class="t r" style="left:410px;width:120px;top:44px;letter-spacing:-0.15px">0</div>
<div class="t r" style="left:474px;width:120px;top:44px;letter-spacing:-0.15px">0</div>
<div class="t r" style="left:605px;width:120px;top:44px;letter-spacing:-0.15px">0.00</div>
<div class="t r" style="left:693px;width:120px;top:44px;letter-spacing:-0.15px">0.00</div>
<div class="t" style="left:6px;top:62px;letter-spacing:-0.15px;">TWI</div>
<div class="t" style="left:79px;top:62px;letter-spacing:-0.15px;">Twint</div>
<div class="t r" style="left:357px;width:120px;top:62px;letter-spacing:-0.15px">0</div>
<div class="t r" style="left:410px;width:120px;top:62px;letter-spacing:-0.15px">0</div>
<div class="t r" style="left:474px;width:120px;top:62px;letter-spacing:-0.15px">0</div>
<div class="t r" style="left:605px;width:120px;top:62px;letter-spacing:-0.15px">0.00</div>
<div class="t r" style="left:693px;width:120px;top:62px;letter-spacing:-0.15px">0.00</div>
</div>
<div class="t ui" style="left:3px;top:738px;letter-spacing:-0.5px;word-spacing:1.4px">Erfasst: 14.12.22 / kli Geändert: 14.12.22 /</div>
<svg style="left:911px;top:740px" width="3" height="15" viewBox="0 0 3 15"><path d="M0 0h2v2h-2zM0 4h2v2h-2zM0 8h2v2h-2zM0 12h2v2h-2z" fill="#b0a694"/><path d="M0 0h1v1h-1zM0 4h1v1h-1zM0 8h1v1h-1zM0 12h1v1h-1z" fill="#8a7e6a"/></svg>
<svg style="left:982px;top:740px" width="3" height="15" viewBox="0 0 3 15"><path d="M0 0h2v2h-2zM0 4h2v2h-2zM0 8h2v2h-2zM0 12h2v2h-2z" fill="#b0a694"/><path d="M0 0h1v1h-1zM0 4h1v1h-1zM0 8h1v1h-1zM0 12h1v1h-1z" fill="#8a7e6a"/></svg>
<div class="t" style="left:918.3px;top:741px;letter-spacing:-0.3px">Normal / pav</div>
<svg style="left:990.5px;top:740.4px" width="13" height="13.6" viewBox="0 0 13 14"><path d="M4.69 2.04L5.17 0.24L7.83 0.24L8.31 2.04L9.76 2.90L11.52 2.43L12.85 4.81L11.57 6.14L11.57 7.86L12.85 9.19L11.52 11.57L9.76 11.10L8.31 11.96L7.83 13.76L5.17 13.76L4.69 11.96L3.24 11.10L1.48 11.57L0.15 9.19L1.43 7.86L1.43 6.14L0.15 4.81L1.48 2.43L3.24 2.90Z" fill="#3f6fe0" stroke="#3f6fe0" stroke-width="0.8" stroke-linejoin="round"/><circle cx="6.5" cy="7" r="2.4" fill="#f0f0f0"/></svg>
</body></html>
